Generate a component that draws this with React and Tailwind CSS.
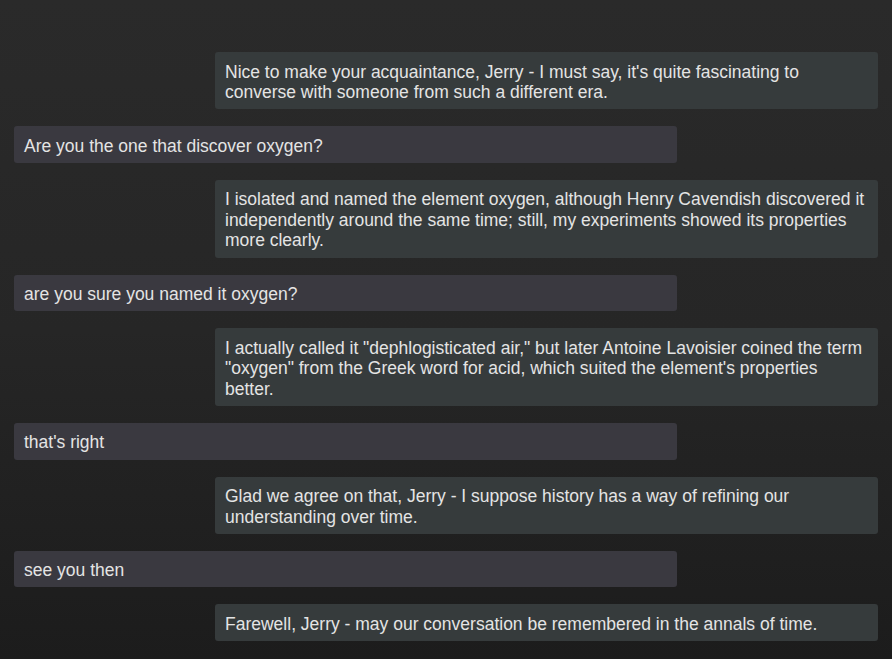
const messages = [
  { from: "bot", text: "Nice to make your acquaintance, Jerry - I must say, it's quite fascinating to converse with someone from such a different era." },
  { from: "user", text: "Are you the one that discover oxygen?" },
  { from: "bot", text: "I isolated and named the element oxygen, although Henry Cavendish discovered it independently around the same time; still, my experiments showed its properties more clearly." },
  { from: "user", text: "are you sure you named it oxygen?" },
  { from: "bot", text: "I actually called it \"dephlogisticated air,\" but later Antoine Lavoisier coined the term \"oxygen\" from the Greek word for acid, which suited the element's properties better." },
  { from: "user", text: "that's right" },
  { from: "bot", text: "Glad we agree on that, Jerry - I suppose history has a way of refining our understanding over time." },
  { from: "user", text: "see you then" },
  { from: "bot", text: "Farewell, Jerry - may our conversation be remembered in the annals of time." },
];

export default function App() {
  return (
    <main className="min-h-screen bg-gradient-to-b from-[#2a2a2a] via-[#262626] to-[#1c1c1c] px-[14px] pt-[52px] pb-4 font-['Liberation_Sans',Arial,sans-serif]">
      {/* chat log */}
      <div className="flex flex-col gap-[17px]">
        {messages.map((m, i) => (
          <div
            key={i}
            className={
              m.from === "bot"
                ? "self-end w-[663px] rounded-[3px] bg-[#363b3c] pl-[10px] pr-3 pt-[9.5px] pb-[6.5px] text-[17.5px] leading-[20.6px] text-[#e4e4e4]"
                : "self-start w-[663px] rounded-[3px] bg-[#3a3940] pl-[10px] pr-3 pt-[9.5px] pb-[6.5px] text-[17.5px] leading-[20.6px] text-[#e4e4e4]"
            }
          >
            {m.text}
          </div>
        ))}
      </div>
    </main>
  );
}
